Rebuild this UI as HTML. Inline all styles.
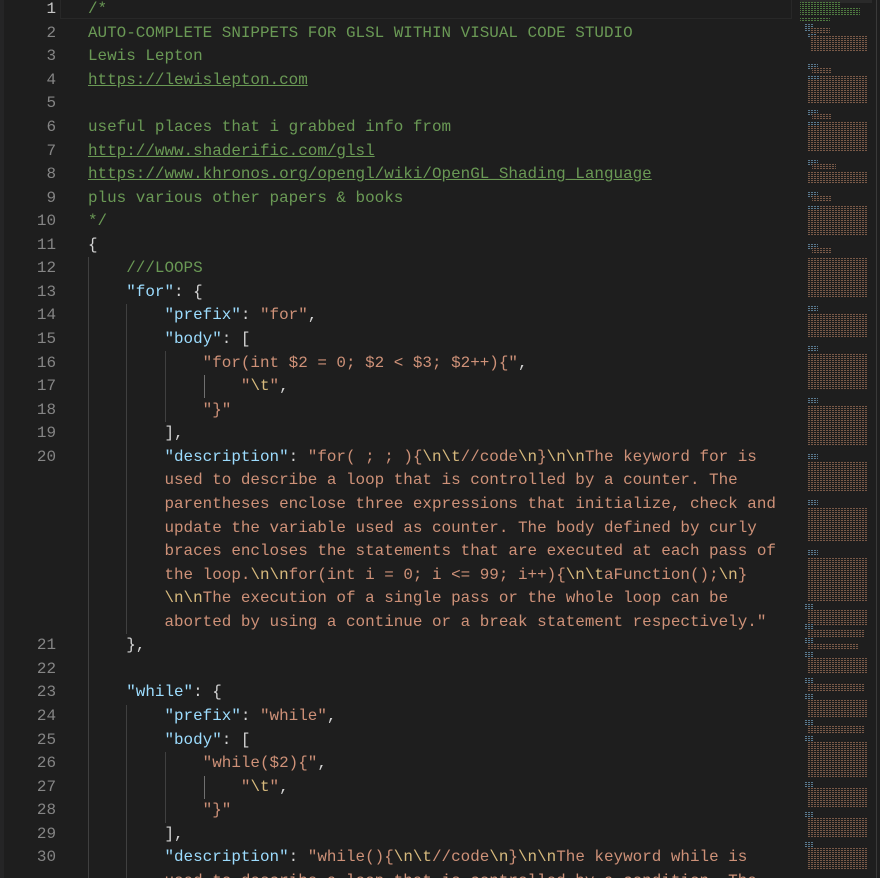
<!DOCTYPE html>
<html><head><meta charset="utf-8"><style>
html,body{margin:0;padding:0;background:#1e1e1e;width:880px;height:878px;overflow:hidden}
.ed{position:absolute;left:0;top:0;width:880px;height:878px;background:#1e1e1e;overflow:hidden}
.strip{position:absolute;left:0;top:0;width:4px;height:878px;background:#252526}
.row{position:absolute;left:0;width:800px;height:23.56px;line-height:23.56px;font-family:"Liberation Mono",monospace;font-size:15.93px;white-space:pre;color:#d4d4d4;overflow:visible}
.ln{position:absolute;left:0;width:56px;color:#858585;text-align:right}
.cd{position:absolute;left:88px}
.c{color:#6a9955}.k{color:#9cdcfe}.s{color:#ce9178}.e{color:#d7ba7d}.u{text-decoration:underline}
.g{position:absolute;width:1px;background:#404040}
.cur{position:absolute;left:60px;width:732px;top:-3px;height:22px;border:1px solid #282828;box-sizing:border-box}
</style></head><body><div class="ed">
<div class="strip"></div>
<div class="cur"></div>
<div class="g" style="left:88px;top:257px;height:623px"></div>
<div class="g" style="left:126px;top:304px;height:330px"></div>
<div class="g" style="left:126px;top:705px;height:175px"></div>
<div class="g" style="left:165px;top:351px;height:71px"></div>
<div class="g" style="left:165px;top:752px;height:71px"></div>
<div class="g" style="left:204px;top:375px;height:23px;background:#707070"></div>
<div class="g" style="left:204px;top:776px;height:23px;background:#707070"></div>
<div style="position:absolute;left:0;top:2px;width:800px;height:878px">
<div class="row" style="top:-3.8px"><span class="ln" style="color:#c6c6c6">1</span><span class="cd c">/*</span></div>
<div class="row" style="top:19.76px"><span class="ln">2</span><span class="cd c">AUTO-COMPLETE SNIPPETS FOR GLSL WITHIN VISUAL CODE STUDIO</span></div>
<div class="row" style="top:43.32px"><span class="ln">3</span><span class="cd c">Lewis Lepton</span></div>
<div class="row" style="top:66.88px"><span class="ln">4</span><span class="cd c u">https://lewislepton.com</span></div>
<div class="row" style="top:90.44px"><span class="ln">5</span></div>
<div class="row" style="top:114px"><span class="ln">6</span><span class="cd c">useful places that i grabbed info from</span></div>
<div class="row" style="top:137.56px"><span class="ln">7</span><span class="cd c u">http://www.shaderific.com/glsl</span></div>
<div class="row" style="top:161.12px"><span class="ln">8</span><span class="cd c u">https://www.khronos.org/opengl/wiki/OpenGL_Shading_Language</span></div>
<div class="row" style="top:184.68px"><span class="ln">9</span><span class="cd c">plus various other papers &amp; books</span></div>
<div class="row" style="top:208.24px"><span class="ln">10</span><span class="cd c">*/</span></div>
<div class="row" style="top:231.8px"><span class="ln">11</span><span class="cd">{</span></div>
<div class="row" style="top:255.36px"><span class="ln">12</span><span class="cd">    <span class="c">///LOOPS</span></span></div>
<div class="row" style="top:278.92px"><span class="ln">13</span><span class="cd">    <span class="k">"for"</span>: {</span></div>
<div class="row" style="top:302.48px"><span class="ln">14</span><span class="cd">        <span class="k">"prefix"</span>: <span class="s">"for"</span>,</span></div>
<div class="row" style="top:326.04px"><span class="ln">15</span><span class="cd">        <span class="k">"body"</span>: [</span></div>
<div class="row" style="top:349.6px"><span class="ln">16</span><span class="cd">            <span class="s">"for(int $2 = 0; $2 &lt; $3; $2++){"</span>,</span></div>
<div class="row" style="top:373.16px"><span class="ln">17</span><span class="cd">                <span class="s">"<span class="e">\t</span>"</span>,</span></div>
<div class="row" style="top:396.72px"><span class="ln">18</span><span class="cd">            <span class="s">"}"</span></span></div>
<div class="row" style="top:420.28px"><span class="ln">19</span><span class="cd">        ],</span></div>
<div class="row" style="top:443.84px"><span class="ln">20</span><span class="cd">        <span class="k">"description"</span>: <span class="s">"for( ; ; ){<span class="e">\n\t</span>//code<span class="e">\n</span>}<span class="e">\n\n</span>The keyword for is</span></span></div>
<div class="row" style="top:467.4px"><span class="cd s">        used to describe a loop that is controlled by a counter. The</span></div>
<div class="row" style="top:490.96px"><span class="cd s">        parentheses enclose three expressions that initialize, check and</span></div>
<div class="row" style="top:514.52px"><span class="cd s">        update the variable used as counter. The body defined by curly</span></div>
<div class="row" style="top:538.08px"><span class="cd s">        braces encloses the statements that are executed at each pass of</span></div>
<div class="row" style="top:561.64px"><span class="cd s">        the loop.<span class="e">\n\n</span>for(int i = 0; i &lt;= 99; i++){<span class="e">\n\t</span>aFunction();<span class="e">\n</span>}</span></div>
<div class="row" style="top:585.2px"><span class="cd s">        <span class="e">\n\n</span>The execution of a single pass or the whole loop can be</span></div>
<div class="row" style="top:608.76px"><span class="cd s">        aborted by using a continue or a break statement respectively."</span></div>
<div class="row" style="top:632.32px"><span class="ln">21</span><span class="cd">    },</span></div>
<div class="row" style="top:655.88px"><span class="ln">22</span></div>
<div class="row" style="top:679.44px"><span class="ln">23</span><span class="cd">    <span class="k">"while"</span>: {</span></div>
<div class="row" style="top:703px"><span class="ln">24</span><span class="cd">        <span class="k">"prefix"</span>: <span class="s">"while"</span>,</span></div>
<div class="row" style="top:726.56px"><span class="ln">25</span><span class="cd">        <span class="k">"body"</span>: [</span></div>
<div class="row" style="top:750.12px"><span class="ln">26</span><span class="cd">            <span class="s">"while($2){"</span>,</span></div>
<div class="row" style="top:773.68px"><span class="ln">27</span><span class="cd">                <span class="s">"<span class="e">\t</span>"</span>,</span></div>
<div class="row" style="top:797.24px"><span class="ln">28</span><span class="cd">            <span class="s">"}"</span></span></div>
<div class="row" style="top:820.8px"><span class="ln">29</span><span class="cd">        ],</span></div>
<div class="row" style="top:844.36px"><span class="ln">30</span><span class="cd">        <span class="k">"description"</span>: <span class="s">"while(){<span class="e">\n\t</span>//code<span class="e">\n</span>}<span class="e">\n\n</span>The keyword while is</span></span></div>
<div class="row" style="top:867.92px"><span class="cd s">        used to describe a loop that is controlled by a condition. The</span></div>
</div>
<svg style="position:absolute;left:796px;top:0" width="84" height="878">
<defs><pattern id="t" width="3" height="2" patternUnits="userSpaceOnUse"><rect width="2" height="1" fill="#7a5a48"/></pattern>
<pattern id="b" width="3" height="2" patternUnits="userSpaceOnUse"><rect width="2" height="1" fill="#5a7a90"/></pattern>
<pattern id="gr" width="3" height="2" patternUnits="userSpaceOnUse"><rect width="2" height="1" fill="#4f7a40"/></pattern></defs>
<rect x="4" y="0" width="72" height="3" fill="#2a2a2a"/>
<rect x="4" y="2" width="40" height="14" fill="url(#gr)"/>
<rect x="4" y="7" width="60" height="8" fill="url(#gr)"/>
<rect x="4" y="18" width="30" height="4" fill="url(#gr)"/>
<rect x="8" y="24" width="10" height="8" fill="url(#b)"/>
<rect x="14" y="28" width="20" height="6" fill="url(#t)"/>
<rect x="12" y="34" width="8" height="3" fill="url(#b)"/>
<rect x="14" y="36" width="58" height="16" fill="url(#t)"/>
<rect x="12" y="64" width="10" height="6" fill="url(#b)"/><rect x="16" y="68" width="20" height="6" fill="url(#t)"/><rect x="12" y="76" width="60" height="28" fill="url(#t)"/><rect x="12" y="76" width="12" height="3" fill="url(#b)"/>
<rect x="12" y="110" width="10" height="6" fill="url(#b)"/><rect x="16" y="114" width="20" height="6" fill="url(#t)"/><rect x="12" y="122" width="60" height="30" fill="url(#t)"/><rect x="12" y="122" width="12" height="3" fill="url(#b)"/>
<rect x="12" y="160" width="10" height="6" fill="url(#b)"/><rect x="16" y="164" width="24" height="6" fill="url(#t)"/><rect x="12" y="172" width="60" height="12" fill="url(#t)"/>
<rect x="12" y="192" width="10" height="6" fill="url(#b)"/><rect x="16" y="196" width="20" height="6" fill="url(#t)"/><rect x="12" y="206" width="60" height="30" fill="url(#t)"/><rect x="12" y="206" width="12" height="3" fill="url(#b)"/>
<rect x="12" y="244" width="10" height="6" fill="url(#b)"/><rect x="16" y="248" width="20" height="6" fill="url(#t)"/><rect x="12" y="258" width="60" height="40" fill="url(#t)"/>
<rect x="12" y="306" width="10" height="6" fill="url(#b)"/><rect x="12" y="314" width="60" height="24" fill="url(#t)"/>
<rect x="12" y="346" width="10" height="6" fill="url(#b)"/><rect x="12" y="354" width="60" height="36" fill="url(#t)"/>
<rect x="12" y="398" width="10" height="6" fill="url(#b)"/><rect x="12" y="406" width="60" height="40" fill="url(#t)"/>
<rect x="12" y="454" width="10" height="6" fill="url(#b)"/><rect x="12" y="462" width="60" height="30" fill="url(#t)"/>
<rect x="12" y="500" width="10" height="6" fill="url(#b)"/><rect x="12" y="508" width="60" height="34" fill="url(#t)"/>
<rect x="12" y="550" width="10" height="6" fill="url(#b)"/><rect x="12" y="558" width="60" height="44" fill="url(#t)"/>
<rect x="8" y="604" width="10" height="6" fill="url(#b)"/><rect x="12" y="610" width="60" height="16" fill="url(#t)"/>
<rect x="8" y="624" width="10" height="6" fill="url(#b)"/><rect x="12" y="630" width="56" height="8" fill="url(#t)"/>
<rect x="8" y="638" width="10" height="6" fill="url(#b)"/><rect x="12" y="644" width="50" height="6" fill="url(#t)"/>
<rect x="8" y="652" width="10" height="6" fill="url(#b)"/><rect x="12" y="658" width="60" height="16" fill="url(#t)"/>
<rect x="8" y="678" width="10" height="6" fill="url(#b)"/><rect x="12" y="684" width="56" height="8" fill="url(#t)"/>
<rect x="8" y="694" width="10" height="6" fill="url(#b)"/><rect x="12" y="700" width="60" height="18" fill="url(#t)"/>
<rect x="8" y="720" width="10" height="6" fill="url(#b)"/><rect x="12" y="726" width="56" height="8" fill="url(#t)"/>
<rect x="8" y="736" width="10" height="6" fill="url(#b)"/><rect x="12" y="742" width="60" height="36" fill="url(#t)"/>
<rect x="8" y="782" width="10" height="6" fill="url(#b)"/><rect x="12" y="788" width="60" height="20" fill="url(#t)"/>
<rect x="8" y="812" width="10" height="6" fill="url(#b)"/><rect x="12" y="818" width="60" height="20" fill="url(#t)"/>
<rect x="8" y="842" width="10" height="6" fill="url(#b)"/><rect x="12" y="848" width="60" height="22" fill="url(#t)"/>
<rect x="80" y="0" width="1" height="878" fill="#3a3a3a"/>
</svg>
</div></body></html>
